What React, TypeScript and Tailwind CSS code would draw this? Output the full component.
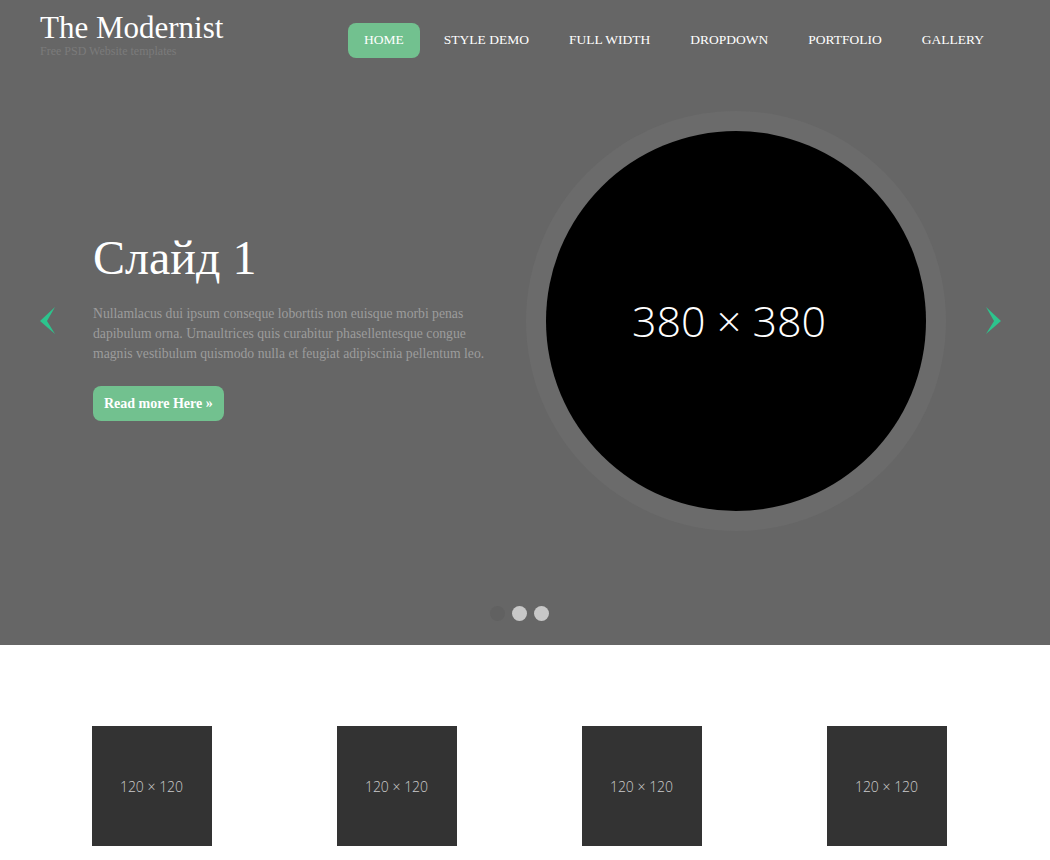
import React from "react";

const NAV = ["Home", "Style Demo", "Full Width", "Dropdown", "Portfolio", "Gallery"];

const serif = "font-['Liberation_Serif',Georgia,serif]";

const Chevron: React.FC<{ dir: "left" | "right" }> = ({ dir }) => (
  <svg width="16" height="28" viewBox="0 0 16 28" className={dir === "right" ? "-scale-x-100" : ""}>
    <polygon points="15,0 0,14 15,27 7,14" fill="#2dc48d" />
  </svg>
);

const Header: React.FC = () => (
  <header className="flex items-start justify-between pl-[40px] pr-[50px] pt-[11px] h-[111px]">
    <div>
      <div className={`${serif} text-[31px] leading-[34px] text-white`}>The Modernist</div>
      <div className={`${serif} text-[12px] leading-[12px] text-[#7b7b7b]`}>Free PSD Website templates</div>
    </div>
    <nav className="flex gap-2 pt-[12px]">
      {NAV.map((item, i) => (
        <a
          key={item}
          className={`${serif} uppercase text-[13.5px] text-white h-[35px] px-4 flex items-center rounded-lg ${
            i === 0 ? "bg-[#72c18f]" : ""
          }`}
        >
          {item}
        </a>
      ))}
    </nav>
  </header>
);

const Slider: React.FC = () => (
  <section className="flex h-[420px] pl-[40px]">
    <div className="w-[16px] flex items-center">
      <Chevron dir="left" />
    </div>
    <div className="ml-[37px] w-[400px] pt-[122px]">
      <h1 className={`${serif} text-[48px] leading-[50px] text-white`}>Слайд 1</h1>
      <p className={`${serif} mt-[21px] w-[400px] text-[13.7px] leading-[20px] text-[#9c9c9c]`}>
        Nullamlacus dui ipsum conseque loborttis non euisque morbi penas dapibulum orna. Urnaultrices quis
        curabitur phasellentesque congue magnis vestibulum quismodo nulla et feugiat adipiscinia pellentum leo.
      </p>
      <a
        className={`${serif} mt-[22px] inline-flex items-center h-[35px] px-[11px] rounded-lg bg-[#72c18f] text-white text-[14px] font-bold`}
      >
        Read more Here »
      </a>
    </div>
    <div className="ml-[33px] w-[420px] h-[420px] rounded-full bg-[#6b6b6b] flex items-center justify-center">
      <div className="w-[380px] h-[380px] rounded-full bg-black flex items-center justify-center pr-[14px]">
        <span className="font-['Open_Sans',sans-serif] font-light text-[43px] text-white">380 × 380</span>
      </div>
    </div>
    <div className="ml-[39px] w-[16px] flex items-center">
      <Chevron dir="right" />
    </div>
  </section>
);

const Thumbs: React.FC = () => (
  <section className="bg-white pt-[81px] pb-[80px] pl-[29px] w-[1009px] grid grid-cols-4">
    {[0, 1, 2, 3].map((i) => (
      <div key={i} className="flex justify-center">
        <div className="w-[120px] h-[120px] bg-[#333333] flex items-center justify-center font-['Open_Sans',sans-serif] font-light text-[14px] text-[#cccccc]">
          120 × 120
        </div>
      </div>
    ))}
  </section>
);

export default function App() {
  return (
    <div className="w-[1050px] bg-white">
      <div className="bg-[#666666] h-[645px]">
        <Header />
        <Slider />
        <div className="flex justify-center gap-[7px] pt-[75px] pr-[12px]">
          <span className="w-[15px] h-[15px] rounded-full bg-[#616161]" />
          <span className="w-[15px] h-[15px] rounded-full bg-[#c8c8c8]" />
          <span className="w-[15px] h-[15px] rounded-full bg-[#c8c8c8]" />
        </div>
      </div>
      <Thumbs />
    </div>
  );
}
